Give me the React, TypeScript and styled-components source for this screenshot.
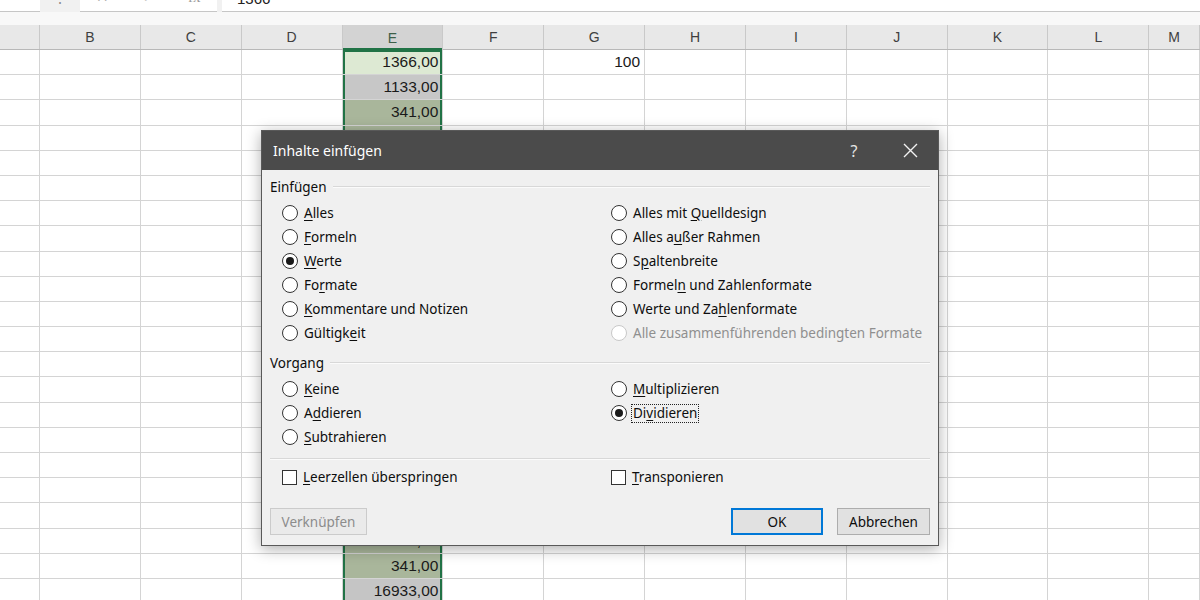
import React from 'react';
import styled, { createGlobalStyle } from 'styled-components';

const GlobalStyle = createGlobalStyle`
  html, body {
    margin: 0;
    padding: 0;
    background: #fff;
  }
  body {
    font-family: "Noto Sans", "Liberation Sans", sans-serif;
  }
`;

const COL_TEMPLATE = '40px repeat(11, 100.85px) 1fr';
const COLUMNS = ['', 'B', 'C', 'D', 'E', 'F', 'G', 'H', 'I', 'J', 'K', 'L', 'M'];
const ROW_COUNT = 22;

// Spalte E: nur die Zeilen ausserhalb des Dialogs tragen sichtbare Werte
const E_VALUES: Record<number, string> = {
  0: '1366,00',
  1: '1133,00',
  2: '341,00',
  19: '2500,00',
  20: '341,00',
  21: '16933,00',
};
const E_FILLS = [
  '#dde9d3', '#c7c7c7', '#a9b69b', '#a9b69b', '#c7c7c7', '#a9b69b', '#a9b69b', '#c7c7c7',
  '#a9b69b', '#a9b69b', '#c7c7c7', '#a9b69b', '#a9b69b', '#c7c7c7', '#a9b69b', '#a9b69b',
  '#c7c7c7', '#a9b69b', '#a9b69b', '#a9b69b', '#a9b69b', '#c5c5c5',
];

const Screen = styled.div`
  position: relative;
  width: 1200px;
  height: 600px;
  overflow: hidden;
  background: #fff;
`;

/* ---------- Bearbeitungsleiste (oben abgeschnitten) ---------- */

const FormulaBar = styled.div`
  display: flex;
  height: 12px;
  background: #f1f1f1;
  overflow: hidden;
`;

const NameBox = styled.div`
  width: 40px;
  background: #fff;
  border-bottom: 1px solid #c6c6c6;
  box-sizing: border-box;
`;

const Grip = styled.div`
  width: 40px;
  display: flex;
  justify-content: center;
  align-items: flex-start;
  color: #8a8a8a;
  font-size: 14px;
  line-height: 14px;
`;

const FxBox = styled.div`
  width: 137px;
  display: flex;
  justify-content: space-around;
  align-items: flex-start;
  background: #fff;
  border-bottom: 1px solid #c6c6c6;
  box-sizing: border-box;
  color: #9a9a9a;
  font-family: "Liberation Serif", serif;
  font-size: 15px;
  line-height: 15px;
`;

const FormulaInput = styled.div`
  flex: 1;
  margin-left: 5px;
  background: #fff;
  border-bottom: 1px solid #c6c6c6;
  box-sizing: border-box;
  padding-left: 15px;
  font-family: "Liberation Sans", sans-serif;
  font-size: 15px;
  line-height: 15px;
  color: #222;
  display: flex;
  align-items: flex-start;
`;

// Glyphen der abgeschnittenen Leiste: nur der untere Rand ist zu sehen
const CutText = styled.span<{ $lift: number }>`
  margin-top: -${(p) => p.$lift}px;
`;

const Spacer = styled.div`
  height: 13px;
  background: #f8f8f8;
`;

/* ---------- Tabelle ---------- */

const HeaderRow = styled.div`
  display: grid;
  grid-template-columns: ${COL_TEMPLATE};
  height: 25px;
  background: #e8e8e8;
  border-bottom: 1px solid #b8b8b8;
  box-sizing: border-box;
`;

const HeaderCell = styled.div<{ $active?: boolean }>`
  display: flex;
  align-items: center;
  justify-content: center;
  border-right: 1px solid #c9c9c9;
  font-family: "Liberation Sans", sans-serif;
  font-size: 14px;
  color: ${(p) => (p.$active ? '#3d5f48' : '#3f3f3f')};
  background: ${(p) => (p.$active ? '#d3d3d3' : 'transparent')};
  box-shadow: ${(p) => (p.$active ? 'inset 0 -2px 0 #217346' : 'none')};
  margin-bottom: ${(p) => (p.$active ? '-1px' : '0')};
`;

const Row = styled.div`
  display: grid;
  grid-template-columns: ${COL_TEMPLATE};
  height: 25.2px;
`;

const Cell = styled.div<{ $fill?: string; $sel?: boolean; $top?: boolean }>`
  display: flex;
  align-items: center;
  justify-content: flex-end;
  padding-right: 4px;
  border-right: 1px solid #d4d4d4;
  border-bottom: 1px solid #d4d4d4;
  background: ${(p) => p.$fill || '#fff'};
  font-family: "Liberation Sans", sans-serif;
  font-size: 15.5px;
  color: #1a1a1a;
  box-shadow: ${(p) =>
    p.$sel
      ? `inset 2px 0 0 #217346, inset -2px 0 0 #217346${p.$top ? ', inset 0 2px 0 #217346' : ''}`
      : 'none'};
`;

/* ---------- Dialog ---------- */

const Dialog = styled.div`
  position: absolute;
  left: 261px;
  top: 130px;
  width: 678px;
  height: 416px;
  box-sizing: border-box;
  border: 1px solid #595959;
  background: #f0f0f0;
  box-shadow: 0 3px 14px rgba(0, 0, 0, 0.32);
  display: flex;
  flex-direction: column;
  font-family: "Noto Sans", sans-serif;
  font-size: 13.5px;
  color: #0d0d0d;
`;

const TitleBar = styled.div`
  height: 39px;
  background: #4b4b4b;
  display: flex;
  align-items: center;
  padding-left: 11px;
  color: #fff;
  font-size: 14px;
`;

const Title = styled.div`
  flex: 1;
`;

const TitleButton = styled.div`
  width: 56px;
  display: flex;
  justify-content: center;
  align-items: center;
  color: #e6e6e6;
  font-size: 16px;
`;

const Body = styled.div`
  flex: 1;
  display: flex;
  flex-direction: column;
  padding: 7px 8px 10px 8px;
`;

const GroupHeader = styled.div<{ $gap?: number }>`
  display: flex;
  align-items: center;
  gap: 6px;
  height: 20px;
  margin-top: ${(p) => p.$gap || 0}px;
`;

const Rule = styled.div`
  flex: 1;
  border-top: 1px solid #d8d8d8;
  border-bottom: 1px solid #fbfbfb;
`;

const FullRule = styled(Rule)`
  flex: none;
  margin-top: 9px;
`;

const Options = styled.div<{ $gap?: number }>`
  display: grid;
  grid-template-columns: 329px 1fr;
  padding-left: 12px;
  margin-top: ${(p) => p.$gap || 0}px;
`;

const OptionColumn = styled.div`
  display: flex;
  flex-direction: column;
`;

const Option = styled.div<{ $disabled?: boolean }>`
  display: flex;
  align-items: center;
  gap: 5px;
  height: 24px;
  color: ${(p) => (p.$disabled ? '#8f8f8f' : '#0d0d0d')};
  white-space: nowrap;
`;

const Radio = styled.span<{ $checked?: boolean; $disabled?: boolean }>`
  width: 16px;
  height: 16px;
  box-sizing: border-box;
  border-radius: 50%;
  border: 1px solid ${(p) => (p.$disabled ? '#c8c8c8' : '#333')};
  background: #fff;
  display: flex;
  align-items: center;
  justify-content: center;
  flex: none;

  &::after {
    content: '';
    display: ${(p) => (p.$checked ? 'block' : 'none')};
    width: 8px;
    height: 8px;
    border-radius: 50%;
    background: #1a1a1a;
  }
`;

const Checkbox = styled.span`
  width: 15px;
  height: 15px;
  box-sizing: border-box;
  border: 1px solid #333;
  background: #fff;
  flex: none;
`;

const OptionText = styled.span<{ $focus?: boolean }>`
  padding: 0 1px;
  outline: ${(p) => (p.$focus ? '1px dotted #222' : 'none')};
  line-height: 17px;
`;

const Key = styled.span`
  text-decoration: underline;
  text-underline-offset: 2px;
`;

const Footer = styled.div`
  display: flex;
  align-items: center;
  gap: 14px;
  margin-top: 19px;
`;

const Button = styled.div<{ $primary?: boolean; $disabled?: boolean; $width: number }>`
  width: ${(p) => p.$width}px;
  height: 27px;
  box-sizing: border-box;
  display: flex;
  align-items: center;
  justify-content: center;
  background: ${(p) => (p.$disabled ? '#eaeaea' : '#e1e1e1')};
  border: ${(p) => (p.$primary ? '2px solid #0078d7' : p.$disabled ? '1px solid #cbcbcb' : '1px solid #adadad')};
  color: ${(p) => (p.$disabled ? '#8c8c8c' : '#0d0d0d')};
`;

const Grow = styled.div`
  flex: 1;
`;

function Label({ text, focus }: { text: string; focus?: boolean }) {
  const i = text.indexOf('&');
  if (i < 0) return <OptionText $focus={focus}>{text}</OptionText>;
  return (
    <OptionText $focus={focus}>
      {text.slice(0, i)}
      <Key>{text[i + 1]}</Key>
      {text.slice(i + 2)}
    </OptionText>
  );
}

type Opt = { text: string; checked?: boolean; disabled?: boolean; focus?: boolean };

const PASTE_LEFT: Opt[] = [
  { text: '&Alles' },
  { text: '&Formeln' },
  { text: '&Werte', checked: true },
  { text: 'Fo&rmate' },
  { text: '&Kommentare und Notizen' },
  { text: 'Gültigk&eit' },
];
const PASTE_RIGHT: Opt[] = [
  { text: 'Alles mit &Quelldesign' },
  { text: 'Alles a&ußer Rahmen' },
  { text: 'S&paltenbreite' },
  { text: 'Formel&n und Zahlenformate' },
  { text: 'Werte und Za&hlenformate' },
  { text: 'Alle zusammenführenden bedingten Formate', disabled: true },
];
const OP_LEFT: Opt[] = [{ text: '&Keine' }, { text: 'A&ddieren' }, { text: '&Subtrahieren' }];
const OP_RIGHT: Opt[] = [
  { text: '&Multiplizieren' },
  { text: 'Di&vidieren', checked: true, focus: true },
];

function RadioList({ items }: { items: Opt[] }) {
  return (
    <OptionColumn>
      {items.map((o) => (
        <Option key={o.text} $disabled={o.disabled}>
          <Radio $checked={o.checked} $disabled={o.disabled} />
          <Label text={o.text} focus={o.focus} />
        </Option>
      ))}
    </OptionColumn>
  );
}

function CloseIcon() {
  return (
    <svg width="15" height="15" viewBox="0 0 15 15">
      <path d="M1 1 L14 14 M14 1 L1 14" stroke="#f2f2f2" strokeWidth="1.4" fill="none" />
    </svg>
  );
}

function Sheet() {
  const rows = Array.from({ length: ROW_COUNT }, (_, r) => r);
  return (
    <>
      <HeaderRow>
        {COLUMNS.map((c, i) => (
          <HeaderCell key={i} $active={c === 'E'}>
            {c}
          </HeaderCell>
        ))}
      </HeaderRow>
      {rows.map((r) => (
        <Row key={r}>
          {COLUMNS.map((c, i) => {
            if (c === 'E') {
              return (
                <Cell key={i} $sel $top={r === 0} $fill={E_FILLS[r]}>
                  {E_VALUES[r] || ''}
                </Cell>
              );
            }
            return <Cell key={i}>{c === 'G' && r === 0 ? '100' : ''}</Cell>;
          })}
        </Row>
      ))}
    </>
  );
}

export default function App() {
  return (
    <Screen>
      <GlobalStyle />
      <FormulaBar>
        <NameBox />
        <Grip>
          <CutText $lift={9}>⋮</CutText>
        </Grip>
        <FxBox>
          <CutText $lift={10}>✕</CutText>
          <CutText $lift={10}>✓</CutText>
          <CutText $lift={10}>fx</CutText>
        </FxBox>
        <FormulaInput>
          <CutText $lift={9}>1366</CutText>
        </FormulaInput>
      </FormulaBar>
      <Spacer />
      <Sheet />

      <Dialog>
        <TitleBar>
          <Title>Inhalte einfügen</Title>
          <TitleButton>?</TitleButton>
          <TitleButton>
            <CloseIcon />
          </TitleButton>
        </TitleBar>
        <Body>
          <GroupHeader>
            <span>Einfügen</span>
            <Rule />
          </GroupHeader>
          <Options $gap={4}>
            <RadioList items={PASTE_LEFT} />
            <RadioList items={PASTE_RIGHT} />
          </Options>

          <GroupHeader $gap={8}>
            <span>Vorgang</span>
            <Rule />
          </GroupHeader>
          <Options $gap={4}>
            <RadioList items={OP_LEFT} />
            <RadioList items={OP_RIGHT} />
          </Options>

          <FullRule />
          <Options $gap={5}>
            <Option>
              <Checkbox />
              <Label text="&Leerzellen überspringen" />
            </Option>
            <Option>
              <Checkbox />
              <Label text="&Transponieren" />
            </Option>
          </Options>

          <Footer>
            <Button $disabled $width={97}>
              Verknüpfen
            </Button>
            <Grow />
            <Button $primary $width={92}>
              OK
            </Button>
            <Button $width={93}>Abbrechen</Button>
          </Footer>
        </Body>
      </Dialog>
    </Screen>
  );
}
